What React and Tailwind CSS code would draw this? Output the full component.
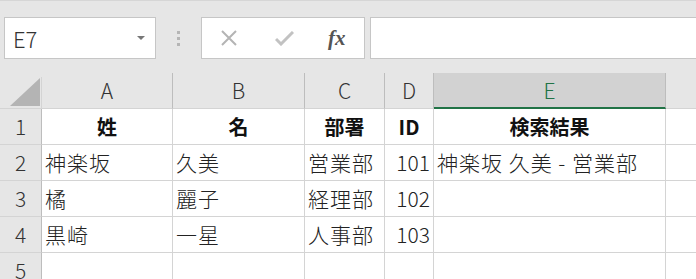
import React from "react";

const font = { fontFamily: '"Noto Sans CJK JP", "Noto Sans", sans-serif' };

const cols = ["A", "B", "C", "D", "E"];

const rows = [
  { n: 1, cells: ["姓", "名", "部署", "ID", "検索結果"], head: true },
  { n: 2, cells: ["神楽坂", "久美", "営業部", "101", "神楽坂 久美 - 営業部"] },
  { n: 3, cells: ["橘", "麗子", "経理部", "102", ""] },
  { n: 4, cells: ["黒崎", "一星", "人事部", "103", ""] },
  { n: 5, cells: ["", "", "", "", ""] },
];

const Toolbar = () => {
  return (
    <div className="h-[73px] border-t border-[#d6d6d6] bg-[#e6e6e6] pt-[16px] flex items-start">
      <div className="ml-[4px] w-[152px] h-[42px] bg-white border border-[#c6c6c6] flex items-center justify-between pl-[8px] pr-[10px]">
        <span className="text-[22px] text-[#333] font-light">E7</span>
        <svg width="8" height="5" viewBox="0 0 8 5">
          <path d="M0 0 L8 0 L4 4 Z" fill="#777" />
        </svg>
      </div>
      <div className="w-[45px] h-[42px] flex flex-col items-center justify-center gap-[3px]">
        <div className="w-[3px] h-[3px] bg-[#b5b5b5]" />
        <div className="w-[3px] h-[3px] bg-[#b5b5b5]" />
        <div className="w-[3px] h-[3px] bg-[#b5b5b5]" />
      </div>
      <div className="w-[164px] h-[42px] bg-white border border-[#c6c6c6] flex items-center">
        <svg className="ml-[19px]" width="16" height="16" viewBox="0 0 16 16">
          <path d="M1 1 L15 15 M15 1 L1 15" stroke="#b4b4b4" strokeWidth="2" />
        </svg>
        <svg className="ml-[38px]" width="19" height="15" viewBox="0 0 19 15">
          <path d="M1 8 L6 13 L18 1" stroke="#c2c2c2" strokeWidth="3" fill="none" />
        </svg>
        <span className="ml-[34px] text-[21px] italic font-bold text-[#555] font-['Liberation_Serif',serif] leading-none">
          fx
        </span>
      </div>
      <div className="ml-[5px] flex-1 h-[42px] bg-white border border-[#c6c6c6] border-r-0" />
    </div>
  );
};

const App = () => {
  const grid = "grid grid-cols-[42px_131px_132px_80px_49px_232px_1fr]";
  return (
    <div className="w-[696px] h-[279px] overflow-hidden bg-white" style={font}>
      <Toolbar />
      <div className={grid + " h-[36px] bg-[#e6e6e6]"}>
        <div className="relative border-r border-[#bdbdbd] border-b border-[#d4d4d4] mt-[4px]">
          <svg className="absolute left-[10px] top-[1px]" width="30" height="28" viewBox="0 0 30 28">
            <path d="M30 0 L30 28 L0 28 Z" fill="#b4b4b4" />
          </svg>
        </div>
        {cols.map((c) => (
          <div
            key={c}
            className={
              c === "E"
                ? "bg-[#d2d2d2] border-b-2 border-[#217346] border-r border-r-[#bdbdbd] flex items-center justify-center text-[21px] text-[#217346] font-light leading-none"
                : "border-r border-[#bdbdbd] border-b border-b-[#d4d4d4] flex items-center justify-center text-[21px] text-[#333] font-light leading-none"
            }
          >
            {c}
          </div>
        ))}
        <div className="border-b border-[#d4d4d4]" />
      </div>
      {rows.map((r) => (
        <div key={r.n} className={grid + " h-[36px]"}>
          <div className="bg-[#e6e6e6] border-r border-[#bdbdbd] border-b border-b-[#d4d4d4] flex items-center justify-center text-[21px] text-[#333] font-light">
            {r.n}
          </div>
          {r.cells.map((v, i) => (
            <div
              key={i}
              className={
                "border-r border-b border-[#d4d4d4] flex items-center px-[3px] whitespace-nowrap overflow-hidden " +
                (r.head
                  ? "justify-center font-bold text-[20px] text-[#111]"
                  : i === 3
                  ? "justify-end text-[21px] text-[#222] font-light"
                  : "justify-start text-[21px] text-[#222] font-light tracking-[1px]")
              }
            >
              {v}
            </div>
          ))}
          <div className="border-b border-[#d4d4d4]" />
        </div>
      ))}
    </div>
  );
};

export default App;
